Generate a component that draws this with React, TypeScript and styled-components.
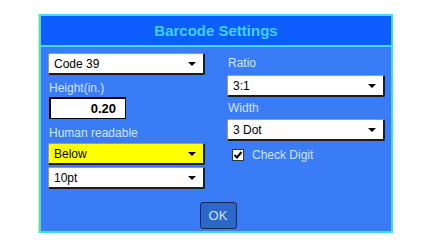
import { createGlobalStyle } from "styled-components";
import styled from "styled-components";

const GlobalStyle = createGlobalStyle`
    body {
        margin: 0;
        background: #ffffff;
        font-family: "Liberation Sans", Arial, sans-serif;
    }
`;

const Page = styled.main`
    padding: 14px 0 0 39px;
`;

const Dialog = styled.section`
    width: 354px;
    height: 219px;
    box-sizing: border-box;
    border: 2px solid #3fdcff;
    box-shadow: -1px 0 0 #e6f24a;
    display: flex;
    flex-direction: column;
    background: #3a7cf6;
`;

const TitleBar = styled.header`
    height: 29px;
    flex-shrink: 0;
    background: #0e5dff;
    border-bottom: 2px solid #3fdcff;
    display: flex;
    align-items: center;
    justify-content: center;
    color: #3fd2ff;
    font-size: 15px;
    font-weight: bold;
`;

const Body = styled.div`
    flex: 1;
    display: flex;
    flex-direction: column;
    padding: 6px 6px 2px 7px;
`;

const Columns = styled.div`
    display: grid;
    grid-template-columns: 157px 158px;
    column-gap: 22px;
`;

const Column = styled.div`
    display: flex;
    flex-direction: column;
`;

const Label = styled.div<{ $top: number }>`
    margin-top: ${(p) => p.$top}px;
    height: 14px;
    line-height: 14px;
    font-size: 12px;
    color: #d2e4ff;
    padding-left: 1px;
`;

const Select = styled.div<{ $top?: number; $highlight?: boolean }>`
    margin-top: ${(p) => p.$top ?? 0}px;
    height: 22px;
    box-sizing: border-box;
    background: ${(p) => (p.$highlight ? "#ffff00" : "#ffffff")};
    border: 1px solid #9a9a9a;
    border-right: 2px solid #1c1c1c;
    border-bottom: 2px solid #1c1c1c;
    border-radius: 2px;
    display: flex;
    align-items: center;
    justify-content: space-between;
    padding: 0 7px 0 5px;
    font-size: 12px;
    color: #000;
`;

const Arrow = styled.span`
    width: 0;
    height: 0;
    border-left: 4px solid transparent;
    border-right: 4px solid transparent;
    border-top: 4px solid #000;
`;

const NumberField = styled.div`
    margin-top: 2px;
    width: 77px;
    height: 22px;
    box-sizing: border-box;
    margin-left: 1px;
    background: #ffffff;
    border: 1px solid #000;
    border-top-width: 2px;
    border-left-width: 2px;
    display: flex;
    align-items: center;
    justify-content: flex-end;
    padding-right: 9px;
    font-size: 13px;
    font-weight: bold;
    color: #000;
`;

const CheckRow = styled.label`
    margin-top: 7px;
    margin-left: 5px;
    display: flex;
    align-items: center;
    gap: 8px;
    height: 14px;
    font-size: 12px;
    color: #d2e4ff;
`;

const Box = styled.span`
    width: 12px;
    height: 12px;
    box-sizing: border-box;
    background: #ffffff;
    border: 1px solid #333;
    display: flex;
    align-items: center;
    justify-content: center;
`;

const Footer = styled.div`
    margin-top: auto;
    display: flex;
    justify-content: center;
`;

const OkButton = styled.button`
    width: 37px;
    height: 27px;
    margin-left: 3px;
    background: #2c68c9;
    border: 1px solid #1a2748;
    border-radius: 3px;
    color: #cfe0ff;
    font-family: inherit;
    font-size: 13px;
    padding: 0;
`;

function Dropdown({ value, top, highlight }: { value: string; top?: number; highlight?: boolean }) {
    return (
        <Select $top={top} $highlight={highlight}>
            <span>{value}</span>
            <Arrow />
        </Select>
    );
}

export default function App() {
    return (
        <>
            <GlobalStyle />
            <Page>
                <Dialog>
                    <TitleBar>Barcode Settings</TitleBar>
                    <Body>
                        <Columns>
                            <Column>
                                <Dropdown value="Code 39" />
                                <Label $top={6}>Height(in.)</Label>
                                <NumberField>0.20</NumberField>
                                <Label $top={7}>Human readable</Label>
                                <Dropdown value="Below" top={3} highlight />
                                <Dropdown value="10pt" top={2} />
                            </Column>
                            <Column>
                                <Label $top={3}>Ratio</Label>
                                <Dropdown value="3:1" top={5} />
                                <Label $top={4}>Width</Label>
                                <Dropdown value="3 Dot" top={4} />
                                <CheckRow>
                                    <Box>
                                        <svg width="10" height="10" viewBox="0 0 10 10">
                                            <path d="M1.5 5 L4 7.5 L8.5 2" fill="none" stroke="#000" strokeWidth="2" />
                                        </svg>
                                    </Box>
                                    Check Digit
                                </CheckRow>
                            </Column>
                        </Columns>
                        <Footer>
                            <OkButton>OK</OkButton>
                        </Footer>
                    </Body>
                </Dialog>
            </Page>
        </>
    );
}
